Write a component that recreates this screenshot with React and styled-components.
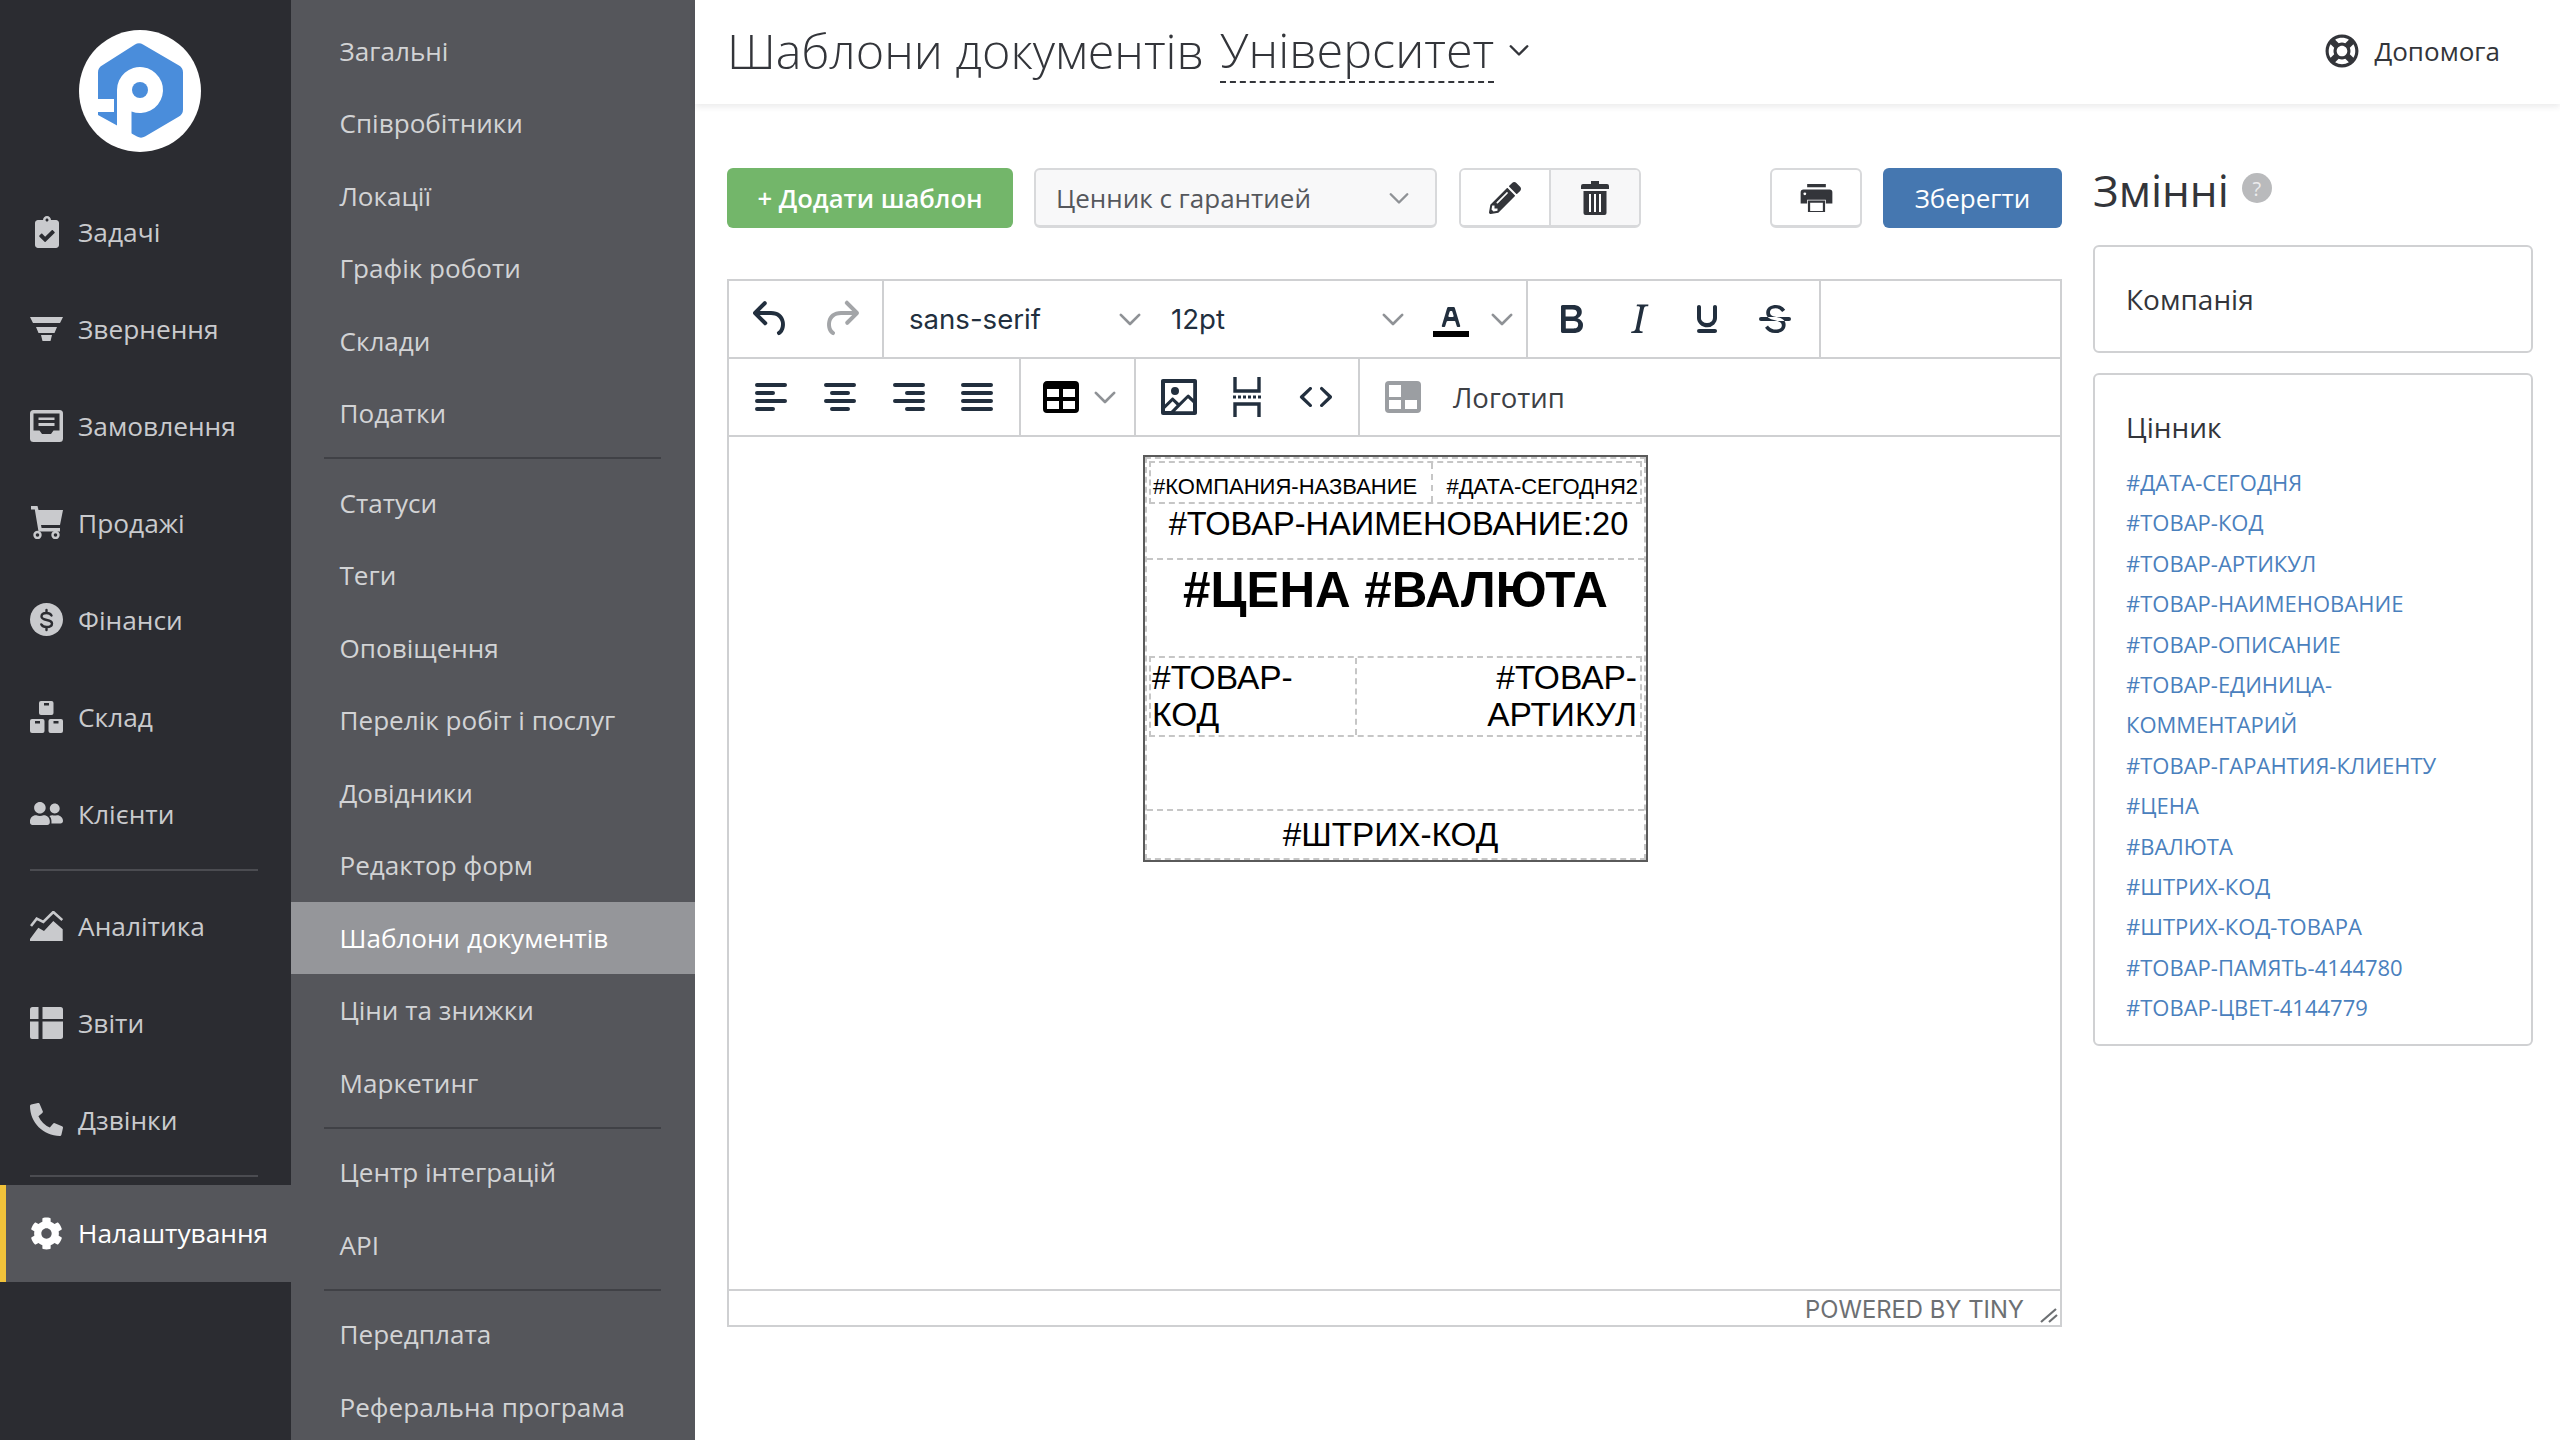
import React from "react";
import styled, { createGlobalStyle } from "styled-components";
import {
  FaClipboardCheck,
  FaUserFriends,
  FaPhoneAlt,
  FaCog,
  FaPencilAlt,
  FaRegLifeRing,
} from "react-icons/fa";

const GlobalStyle = createGlobalStyle`
  html, body {
    margin: 0;
    padding: 0;
    background: #fff;
    font-family: "Open Sans", "Noto Sans", sans-serif;
  }
  * { box-sizing: border-box; }
`;

const Page = styled.div`
  display: flex;
  width: 2560px;
  height: 1440px;
  overflow: hidden;
  background: #fff;
`;

/* main dark nav */
const MainNav = styled.nav`
  width: 291px;
  flex: none;
  background: #2b2c31;
  color: #c9cacd;
`;

const LogoWrap = styled.div`
  height: 183px;
  padding: 30px 0 0 78.5px;
`;

const NavRow = styled.div`
  display: flex;
  align-items: center;
  gap: 15px;
  height: ${(p) => (p.$active ? "96.5px" : "97px")};
  padding-left: ${(p) => (p.$active ? "24px" : "30px")};
  font-size: 26.3px;
  font-weight: 500;
  color: ${(p) => (p.$active ? "#fff" : "#c9cacd")};
  background: ${(p) => (p.$active ? "#55565b" : "transparent")};
  border-left: ${(p) => (p.$active ? "6px solid #f0c23a" : "none")};
`;

const NavIcon = styled.span`
  width: 33px;
  height: 33px;
  flex: none;
  display: flex;
  align-items: center;
  justify-content: center;
`;

const NavDivider = styled.div`
  height: 2px;
  margin: 6.5px 33px ${(p) => p.$after || 6.5}px 30px;
  background: #4b4c51;
`;

/* second level nav */
const SubNav = styled.nav`
  width: 404px;
  flex: none;
  padding-top: 14.5px;
  background: #55565b;
`;

const SubRow = styled.div`
  display: flex;
  align-items: center;
  height: 72.5px;
  padding-left: 48.5px;
  font-size: 26.1px;
  font-weight: ${(p) => (p.$active ? 500 : 400)};
  color: ${(p) => (p.$active ? "#fff" : "#d2d3d5")};
  background: ${(p) => (p.$active ? "#95969a" : "transparent")};
`;

const SubDivider = styled.div`
  height: 2px;
  margin: 7.5px 34px 7.5px 33px;
  background: #404146;
`;

/* content */
const Main = styled.main`
  flex: 1;
  min-width: 0;
`;

const Header = styled.header`
  display: flex;
  align-items: center;
  justify-content: space-between;
  height: 104px;
  padding: 0 60px 3px 32px;
  box-shadow: 0 3px 6px rgba(40, 40, 50, 0.09);
`;

const Title = styled.h1`
  display: flex;
  align-items: center;
  margin: -1px 0 0;
  font-size: 48.5px;
  font-weight: 300;
  color: #33353a;
`;

const TitleSwitch = styled.span`
  margin: 0 7px 0 16px;
  line-height: 64px;
  border-bottom: 2px dashed #33353a;
`;

const Help = styled.div`
  display: flex;
  align-items: center;
  gap: 15px;
  font-size: 26px;
  color: #33353a;
`;

const Body = styled.div`
  display: flex;
  gap: 31px;
  padding: 64px 27px 0 32px;
`;

const EditorCol = styled.div`
  width: 1335px;
  flex: none;
`;

const Actions = styled.div`
  display: flex;
  align-items: center;
  height: 60px;
  margin-bottom: 51px;
`;

const Button = styled.button`
  height: 60px;
  padding: 0;
  border: 0;
  border-radius: 6px;
  font-family: inherit;
  font-size: 26px;
  font-weight: 600;
  color: #fff;
`;

const AddButton = styled(Button)`
  width: 286px;
  font-size: 25.6px;
  background: #73b66a;
`;

const SaveButton = styled(Button)`
  width: 179px;
  margin-left: 21px;
  font-weight: 500;
  background: #4577b0;
`;

const Select = styled.div`
  display: flex;
  align-items: center;
  justify-content: space-between;
  width: 403px;
  height: 60px;
  margin-left: 21px;
  padding: 0 18px 0 20px;
  border: 2px solid #d8d9db;
  border-bottom-width: 3px;
  border-radius: 6px;
  background: #f8f8f9;
  font-size: 26px;
  color: #55575c;
`;

const IconGroup = styled.div`
  display: flex;
  height: 60px;
  margin-left: 22px;
  border: 2px solid #d8d9db;
  border-bottom-width: 3px;
  border-radius: 6px;
  overflow: hidden;
`;

const GroupCell = styled.div`
  display: flex;
  align-items: center;
  justify-content: center;
  width: ${(p) => p.$w}px;
  background: ${(p) => (p.$shade ? "#f7f7f8" : "#fff")};
  border-left: ${(p) => (p.$shade ? "2px solid #d8d9db" : "none")};
`;

const PrintButton = styled(IconGroup)`
  width: 92px;
  margin-left: 129px;
  align-items: center;
  justify-content: center;
`;

/* editor */
const Editor = styled.div`
  display: flex;
  flex-direction: column;
  height: 1048px;
  border: 2px solid #cfd0d2;
`;

const ToolbarRow = styled.div`
  display: flex;
  height: 78px;
  flex: none;
  border-bottom: 2px solid #cfd0d2;
`;

const ToolGroup = styled.div`
  display: flex;
  align-items: center;
  width: ${(p) => p.$w}px;
  padding-left: ${(p) => p.$pad || 0}px;
  border-right: ${(p) => (p.$last ? "none" : "2px solid #cfd0d2")};
  flex: none;
`;

const ToolButton = styled.span`
  display: flex;
  align-items: center;
  justify-content: center;
  width: ${(p) => p.$w || 68}px;
  flex: none;
  color: ${(p) => (p.$off ? "#a3a5a8" : "#222f3e")};
`;

const ColorButton = styled.span`
  display: flex;
  align-items: center;
  gap: 7px;
  padding-left: 18px;
`;

const FontPicker = styled.span`
  display: flex;
  align-items: center;
  justify-content: space-between;
  width: ${(p) => p.$w}px;
  flex: none;
  padding-left: 25px;
  font-family: Inter, "Liberation Sans", sans-serif;
  font-size: 27.6px;
  color: #222f3e;

  svg {
    margin-right: -4px;
  }
`;

const TemplateLabel = styled.span`
  margin-left: 26px;
  font-family: "Open Sans", sans-serif;
  font-size: 27.5px;
  color: #3d4045;
`;

const EditArea = styled.div`
  flex: 1;
  padding: 18px 0 0 414px;
`;

const StatusBar = styled.div`
  display: flex;
  align-items: center;
  justify-content: flex-end;
  height: 36px;
  flex: none;
  padding: 2px 36px 0 0;
  border-top: 2px solid #cfd0d2;
  position: relative;
  font-family: Inter, "Liberation Sans", sans-serif;
  font-size: 23.8px;
  color: #6d7073;
`;

const ResizeHandle = styled.svg`
  position: absolute;
  right: 1px;
  bottom: 1px;
`;

/* label preview */
const Label = styled.div`
  width: 505px;
  height: 407px;
  border: 2px solid #5a5a5a;
  font-family: "Liberation Sans", Arial, sans-serif;
  color: #000;
`;

const LabelInner = styled.div`
  display: flex;
  flex-direction: column;
  height: 100%;
  border: 2px dashed #c6c6c6;
`;

const LabelRow = styled.div`
  height: ${(p) => (p.$h ? `${p.$h}px` : "auto")};
  flex: ${(p) => (p.$h ? "none" : 1)};
  padding-top: ${(p) => p.$top || 0}px;
  padding-right: ${(p) => p.$right || 0}px;
  border-bottom: ${(p) => (p.$line ? "2px dashed #c6c6c6" : "none")};
  font-size: ${(p) => p.$size || 32.6}px;
  font-weight: ${(p) => (p.$bold ? 700 : 400)};
  text-align: center;
`;

const NestedTable = styled.div`
  display: grid;
  grid-template-columns: ${(p) => p.$cols};
  height: ${(p) => p.$h}px;
  margin: 0 2px;
  border: 2px dashed #c6c6c6;
  text-align: left;
`;

const NestedCell = styled.div`
  padding: ${(p) => p.$pad || "0 3px"};
  font-size: ${(p) => p.$size}px;
  line-height: ${(p) => p.$lh || "normal"};
  text-align: ${(p) => p.$align || "left"};
  white-space: ${(p) => (p.$nowrap ? "nowrap" : "normal")};
  border-right: ${(p) => (p.$line ? "2px dashed #c6c6c6" : "none")};
`;

const LabelName = styled.div`
  margin-top: 1px;
  line-height: 38px;
  text-indent: 6px;
`;

/* right column */
const VarsCol = styled.aside`
  width: 440px;
  flex: none;
`;

const VarsTitle = styled.h2`
  display: flex;
  align-items: center;
  gap: 13px;
  height: 48px;
  margin: -2px 0 31px;
  font-size: 44px;
  font-weight: 400;
  color: #33353a;
`;

const QuestionBadge = styled.span`
  display: flex;
  align-items: center;
  justify-content: center;
  width: 30px;
  height: 30px;
  margin-top: -4px;
  border-radius: 50%;
  background: #b9babc;
  font-size: 20px;
  color: #ececed;
`;

const Card = styled.div`
  margin-bottom: ${(p) => p.$mb || 0}px;
  padding: ${(p) => p.$pad};
  border: 2px solid #d0d1d3;
  border-radius: 6px;
`;

const CardTitle = styled.div`
  font-size: 28px;
  font-weight: 500;
  line-height: 38px;
  color: #33353a;
`;

const VarList = styled.div`
  margin-top: 16px;
`;

const VarLink = styled.div`
  font-size: 22px;
  line-height: 40.4px;
  color: #4a80bd;
`;

const Chevron = ({ size = 40, color = "#8f9296" }) => (
  <svg width={size} height={size} viewBox="0 0 24 24" fill="none">
    <path d="M6.5 9.5L12 15l5.5-5.5" stroke={color} strokeWidth="1.6" strokeLinecap="round" strokeLinejoin="round" />
  </svg>
);

const TinyIcon = ({ d, size = 48 }) => (
  <svg width={size} height={size} viewBox="0 0 24 24" fill="currentColor" fillRule="evenodd">
    <path d={d} />
  </svg>
);

const Logo = () => (
  <svg width="122" height="122" viewBox="0 0 122 122">
    <circle cx="61" cy="61" r="61" fill="#fff" />
    <path
      d="M56 14.5a8 8 0 0 1 8 0l36 21a8 8 0 0 1 4 7v37a8 8 0 0 1-4 7l-34 20a8 8 0 0 1-8 0L19 85V42.500a8 8 0 0 1 4-7z"
      fill="#4a8ddb"
    />
    <path d="M15 69h20v13H15z" fill="#fff" />
    <path d="M38 60a23 23 0 1 1 14.500 21.400V112L38 104z" fill="#fff" />
    <circle cx="61" cy="60" r="8" fill="#4a8ddb" />
  </svg>
);

const FilterIcon = () => (
  <svg width="33" height="24" viewBox="0 0 33 24" fill="currentColor">
    <path d="M0 0h33l-3 6H3zM6 10h21l-2.500 6h-16zM11 18h11l-1.500 6h-8z" />
  </svg>
);

const InboxIcon = () => (
  <svg width="33" height="32" viewBox="0 0 33 32">
    <rect width="33" height="32" rx="3.500" fill="currentColor" />
    <path d="M3.500 3.500h26v17h-6l-2.500 3.500h-9l-2.500-3.500h-6z" fill="#2b2c31" />
    <rect x="8.500" y="7.500" width="16" height="2.500" fill="currentColor" />
    <rect x="8.500" y="13" width="16" height="3" fill="currentColor" />
  </svg>
);

const CartIcon = () => (
  <svg width="33" height="33" viewBox="0 0 33 33" fill="currentColor">
    <path d="M1 0h6.500l1 4H33l-3 15H11l.6 3H30v3.500H8.500L4.800 3.500H1z" />
    <circle cx="7.500" cy="29" r="3" fill="none" stroke="currentColor" strokeWidth="2.400" />
    <circle cx="25.500" cy="29" r="3" fill="none" stroke="currentColor" strokeWidth="2.400" />
  </svg>
);

const FinanceIcon = () => (
  <svg width="33" height="33" viewBox="0 0 33 33">
    <circle cx="16.500" cy="16.500" r="16.500" fill="currentColor" />
    <path
      d="M21.500 12.500c-1-1.800-2.800-2.500-5-2.500-2.800 0-5 1.300-5 3.500 0 4.800 10.500 2.200 10.500 7 0 2.200-2.300 3.500-5.500 3.500-2.300 0-4.200-.8-5.200-2.600M16.500 7v3M16.500 24v3"
      fill="none"
      stroke="#2b2c31"
      strokeWidth="2.400"
      strokeLinecap="round"
    />
  </svg>
);

const BoxesIcon = () => (
  <svg width="33" height="32" viewBox="0 0 33 32" fill="currentColor">
    <rect x="9" y="0" width="14.500" height="14" rx="2" />
    <rect x="14" y="2" width="5" height="2.500" fill="#2b2c31" />
    <rect x="0" y="18" width="14.500" height="14" rx="2" />
    <rect x="18.500" y="18" width="14.500" height="14" rx="2" />
    <rect x="5" y="20" width="5" height="2.500" fill="#2b2c31" />
    <rect x="23.500" y="20" width="5" height="2.500" fill="#2b2c31" />
  </svg>
);

const ChartIcon = () => (
  <svg width="33" height="30" viewBox="0 0 33 30" fill="currentColor">
    <path d="M0 30v-2l8.300-11.300 5.700 3.300 9.300-10 9.400 8.300V30z" />
    <path d="M1 15l5.700-7.300 6.600 3.300 10-10 9 8" fill="none" stroke="currentColor" strokeWidth="2.600" />
  </svg>
);

const ReportsIcon = () => (
  <svg width="33" height="32" viewBox="0 0 33 32" fill="currentColor">
    <path d="M2.500 0h6v12H0V2.500A2.500 2.500 0 0 1 2.500 0z" />
    <path d="M12.500 0H30.500A2.500 2.500 0 0 1 33 2.500V12H12.500z" />
    <path d="M0 14.500h8.500V32H2a2 2 0 0 1-2-2z" />
    <path d="M12.500 14.500H33V29.500a2.500 2.500 0 0 1-2.500 2.500H12.500z" />
  </svg>
);

const TrashIcon = () => (
  <svg width="28" height="34" viewBox="0 0 28 34" fill="#33353a">
    <path d="M10 0h8v3h8a2 2 0 0 1 2 2v3H0V5a2 2 0 0 1 2-2h8z" />
    <path d="M2.500 10h23v22a2 2 0 0 1-2 2h-19a2 2 0 0 1-2-2z" />
    <path d="M8 13h2v18H8zM13 13h2v18h-2zM18 13h2v18h-2z" fill="#fff" />
  </svg>
);

const PrintIcon = () => (
  <svg width="33" height="28" viewBox="0 0 34 30" fill="#33353a">
    <rect x="7" y="0" width="20" height="3.500" />
    <path d="M3 6h28a3 3 0 0 1 3 3v12h-7v-4H7v4H0V9a3 3 0 0 1 3-3z" />
    <path d="M9 19h16v11H9z" fill="none" stroke="#33353a" strokeWidth="2.400" />
    <circle cx="4.500" cy="10.500" r="1.500" fill="#fff" />
  </svg>
);

const tiny = {
  undo: "M6.4 8H12c3.700 0 6.200 2 6.800 5.100.6 2.700-.4 5.600-2.300 6.800a1 1 0 0 1-1-1.800c1.100-.6 1.800-2.700 1.400-4.600-.5-2.100-2.100-3.500-4.900-3.500H6.400l3.300 3.300a1 1 0 1 1-1.400 1.400l-5-5a1 1 0 0 1 0-1.400l5-5a1 1 0 0 1 1.400 1.400L6.400 8z",
  redo: "M17.600 10H12c-2.800 0-4.400 1.400-4.900 3.500-.4 2 .3 4 1.400 4.600a1 1 0 1 1-1 1.800c-2-1.200-2.900-4.100-2.300-6.800.6-3 3-5.100 6.800-5.100h5.600l-3.300-3.300a1 1 0 1 1 1.400-1.400l5 5a1 1 0 0 1 0 1.400l-5 5a1 1 0 0 1-1.400-1.400l3.300-3.300z",
  bold: "M7.800 19c-.3 0-.5 0-.6-.2l-.2-.5V5.700c0-.2 0-.4.200-.5l.6-.2h5c1.500 0 2.700.3 3.500 1 .7.6 1.100 1.400 1.100 2.500a3 3 0 0 1-.6 1.900c-.4.6-1 1-1.600 1.200.4.100.9.300 1.300.6s.8.7 1 1.200c.4.4.5 1 .5 1.600 0 1.300-.4 2.300-1.300 3-.8.7-2.100 1-3.800 1H7.800zm5-8.300c.6 0 1.200-.1 1.600-.5.4-.3.6-.7.6-1.300 0-1.100-.8-1.700-2.300-1.700H9.300v3.500h3.400zm.5 6c.7 0 1.300-.1 1.700-.4.4-.4.6-.9.6-1.500s-.2-1-.7-1.400c-.4-.3-1-.4-2-.4H9.400v3.800h4z",
  italic: "M16.700 4.700l-.1.9h-.3c-.6 0-1 0-1.400.3-.3.3-.4.6-.5 1.100l-2.100 9.800v.6c0 .5.4.8 1.400.8h.2l-.2.8H8l.2-.8h.2c1.100 0 1.800-.5 2-1.500l2-9.800.1-.5c0-.6-.4-.8-1.400-.8h-.3l.2-.9h5.800z",
  underline: "M16 5c.6 0 1 .4 1 1v5.500a4 4 0 0 1-.4 1.800l-1 1.400a5.300 5.300 0 0 1-5.500 1 5 5 0 0 1-1.600-1c-.5-.4-.8-.9-1.100-1.400a4 4 0 0 1-.4-1.800V6c0-.6.4-1 1-1s1 .4 1 1v5.500c0 .3 0 .6.2 1l.6.7a3.300 3.300 0 0 0 2.200.8 3.400 3.400 0 0 0 2.200-.8c.3-.2.4-.5.6-.8l.2-.9V6c0-.6.4-1 1-1zM8 17h8c.6 0 1 .4 1 1s-.4 1-1 1H8a1 1 0 0 1 0-2z",
  strike: "M15.600 8.500c-.5-.7-1-1.100-1.300-1.300-.6-.4-1.300-.6-2-.6-2.700 0-2.800 1.700-2.800 2.100 0 1.600 1.800 2 3.200 2.300 4.400.9 4.600 2.800 4.600 3.900 0 1.400-.7 4.100-5 4.100A6.200 6.200 0 0 1 7 16.400l1.500-1.100c.4.6 1.600 2 3.700 2 1.600 0 2.500-.4 3-1.200.4-.8.3-2-.8-2.600-.7-.4-1.600-.7-2.900-1-1-.2-3.900-.8-3.900-3.600C7.600 6 10.300 5 12.400 5c2.900 0 4.200 1.600 4.700 2.400l-1.500 1.100zM5 11h14a1 1 0 0 1 0 2H5a1 1 0 0 1 0-2z",
  alignLeft: "M5 5h14a1 1 0 0 1 0 2H5a1 1 0 1 1 0-2zm0 4h8a1 1 0 0 1 0 2H5a1 1 0 1 1 0-2zm0 8h8a1 1 0 0 1 0 2H5a1 1 0 0 1 0-2zm0-4h14a1 1 0 0 1 0 2H5a1 1 0 0 1 0-2z",
  alignCenter: "M5 5h14a1 1 0 0 1 0 2H5a1 1 0 1 1 0-2zm3 4h8a1 1 0 0 1 0 2H8a1 1 0 1 1 0-2zm0 8h8a1 1 0 0 1 0 2H8a1 1 0 0 1 0-2zm-3-4h14a1 1 0 0 1 0 2H5a1 1 0 0 1 0-2z",
  alignRight: "M5 5h14a1 1 0 0 1 0 2H5a1 1 0 1 1 0-2zm6 4h8a1 1 0 0 1 0 2h-8a1 1 0 0 1 0-2zm0 8h8a1 1 0 0 1 0 2h-8a1 1 0 0 1 0-2zm-6-4h14a1 1 0 0 1 0 2H5a1 1 0 0 1 0-2z",
  justify: "M5 5h14a1 1 0 0 1 0 2H5a1 1 0 1 1 0-2zm0 4h14a1 1 0 0 1 0 2H5a1 1 0 1 1 0-2zm0 4h14a1 1 0 0 1 0 2H5a1 1 0 0 1 0-2zm0 4h14a1 1 0 0 1 0 2H5a1 1 0 0 1 0-2z",
  table: "M19 4a2 2 0 0 1 2 2v12a2 2 0 0 1-2 2H5a2 2 0 0 1-2-2V6c0-1.100.9-2 2-2h14zM5 14v4h6v-4H5zm14 0h-6v4h6v-4zm0-6h-6v4h6V8zM5 12h6V8H5v4z",
  image: "M5 15.700l3.300-3.200c.3-.3.7-.3 1 0L12 15l4.100-4c.3-.4.8-.4 1 0l2 1.900V5H5v10.700zM5 18v1h3l2.800-2.900-2-2L5 17.900zm14-3l-2.500-2.400-6.400 6.500H19v-4.100zM4 3h16c.6 0 1 .4 1 1v16c0 .6-.4 1-1 1H4a1 1 0 0 1-1-1V4c0-.6.4-1 1-1zm6 8a2 2 0 1 0 0-4 2 2 0 0 0 0 4z",
  code: "M9.800 15.700c.3.3.3.8 0 1-.3.4-.9.4-1.200 0l-4.400-4.100a.8.8 0 0 1 0-1.200l4.400-4.200c.3-.3.9-.3 1.200 0 .3.3.3.8 0 1.100L6 12l3.800 3.700zM14.200 15.700c-.3.3-.3.8 0 1 .4.4.9.4 1.200 0l4.400-4.100c.3-.3.3-.9 0-1.200l-4.400-4.200a.8.8 0 0 0-1.200 0c-.3.3-.3.8 0 1.100L18 12l-3.800 3.700z",
};

const TextColorIcon = () => (
  <svg width="48" height="48" viewBox="0 0 24 24" fill="#222f3e" fillRule="evenodd">
    <path d="M8.700 16h-.8a.5.5 0 0 1-.5-.6l2.700-9c.1-.3.3-.4.5-.4h2.800c.2 0 .4.100.5.400l2.700 9a.5.5 0 0 1-.5.600h-.8a.5.500 0 0 1-.4-.4l-.7-2.200c0-.3-.3-.4-.5-.4h-3.400c-.2 0-.4.100-.5.400l-.7 2.200c0 .3-.2.400-.4.400zm2.600-7.600l-.6 2a.5.5 0 0 0 .5.600h1.600a.5.5 0 0 0 .5-.6l-.6-2c0-.3-.3-.4-.5-.4h-.4c-.2 0-.4.100-.5.400z" />
    <path d="M3 18h18v3H3z" fill="#000" />
  </svg>
);

const PageBreakIcon = () => (
  <svg width="48" height="48" viewBox="0 0 24 24" fill="none" stroke="currentColor" strokeWidth="1.700">
    <path d="M6 2v7h12V2M6 22v-6.500h12V22" />
    <path d="M5 12h14" strokeWidth="1.600" strokeDasharray="1.500 1" />
  </svg>
);

const TemplateIcon = () => (
  <svg width="48" height="48" viewBox="0 0 24 24">
    <rect x="3" y="4" width="18" height="16" rx="2" fill="#9b9ea2" />
    <rect x="5" y="6" width="6" height="6" fill="#fff" />
    <rect x="5" y="13.500" width="6" height="4.500" fill="#fff" />
    <rect x="13" y="13.500" width="6" height="4.500" fill="#fff" />
  </svg>
);

const navTop = [
  ["Задачі", <FaClipboardCheck size={32} />],
  ["Звернення", <FilterIcon />],
  ["Замовлення", <InboxIcon />],
  ["Продажі", <CartIcon />],
  ["Фінанси", <FinanceIcon />],
  ["Склад", <BoxesIcon />],
  ["Клієнти", <FaUserFriends size={33} />],
];

const navMiddle = [
  ["Аналітика", <ChartIcon />],
  ["Звіти", <ReportsIcon />],
  ["Дзвінки", <FaPhoneAlt size={33} />],
];

const subGroups = [
  ["Загальні", "Співробітники", "Локації", "Графік роботи", "Склади", "Податки"],
  ["Статуси", "Теги", "Оповіщення", "Перелік робіт і послуг", "Довідники", "Редактор форм", "Шаблони документів", "Ціни та знижки", "Маркетинг"],
  ["Центр інтеграцій", "API"],
  ["Передплата", "Реферальна програма"],
];

const variables = [
  "#ДАТА-СЕГОДНЯ",
  "#ТОВАР-КОД",
  "#ТОВАР-АРТИКУЛ",
  "#ТОВАР-НАИМЕНОВАНИЕ",
  "#ТОВАР-ОПИСАНИЕ",
  "#ТОВАР-ЕДИНИЦА-КОММЕНТАРИЙ",
  "#ТОВАР-ГАРАНТИЯ-КЛИЕНТУ",
  "#ЦЕНА",
  "#ВАЛЮТА",
  "#ШТРИХ-КОД",
  "#ШТРИХ-КОД-ТОВАРА",
  "#ТОВАР-ПАМЯТЬ-4144780",
  "#ТОВАР-ЦВЕТ-4144779",
];

function App() {
  return (
    <Page>
      <GlobalStyle />
      <MainNav>
        <LogoWrap>
          <Logo />
        </LogoWrap>
        {navTop.map(([label, icon]) => (
          <NavRow key={label}>
            <NavIcon>{icon}</NavIcon>
            {label}
          </NavRow>
        ))}
        <NavDivider />
        {navMiddle.map(([label, icon]) => (
          <NavRow key={label}>
            <NavIcon>{icon}</NavIcon>
            {label}
          </NavRow>
        ))}
        <NavDivider $after={8.5} />
        <NavRow $active>
          <NavIcon>
            <FaCog size={33} />
          </NavIcon>
          Налаштування
        </NavRow>
      </MainNav>

      <SubNav>
        {subGroups.map((group, i) => (
          <React.Fragment key={group[0]}>
            {i > 0 && <SubDivider />}
            {group.map((item) => (
              <SubRow key={item} $active={item === "Шаблони документів"}>
                {item}
              </SubRow>
            ))}
          </React.Fragment>
        ))}
      </SubNav>

      <Main>
        <Header>
          <Title>
            Шаблони документів
            <TitleSwitch>Університет</TitleSwitch>
            <Chevron size={36} color="#33353a" />
          </Title>
          <Help>
            <FaRegLifeRing size={34} />
            Допомога
          </Help>
        </Header>

        <Body>
          <EditorCol>
            <Actions>
              <AddButton>+ Додати шаблон</AddButton>
              <Select>
                Ценник с гарантией
                <Chevron size={36} />
              </Select>
              <IconGroup>
                <GroupCell $w={88}>
                  <FaPencilAlt size={32} color="#33353a" />
                </GroupCell>
                <GroupCell $w={90} $shade>
                  <TrashIcon />
                </GroupCell>
              </IconGroup>
              <PrintButton>
                <PrintIcon />
              </PrintButton>
              <SaveButton>Зберегти</SaveButton>
            </Actions>

            <Editor>
              <ToolbarRow>
                <ToolGroup $w={155} $pad={6}>
                  <ToolButton $w={71}>
                    <TinyIcon d={tiny.undo} />
                  </ToolButton>
                  <ToolButton $w={70} $off>
                    <TinyIcon d={tiny.redo} />
                  </ToolButton>
                </ToolGroup>
                <ToolGroup $w={644}>
                  <FontPicker $w={262}>
                    sans-serif
                    <Chevron />
                  </FontPicker>
                  <FontPicker $w={263}>
                    12pt
                    <Chevron />
                  </FontPicker>
                  <ColorButton>
                    <TextColorIcon />
                    <Chevron />
                  </ColorButton>
                </ToolGroup>
                <ToolGroup $w={293} $pad={9}>
                  <ToolButton>
                    <TinyIcon d={tiny.bold} />
                  </ToolButton>
                  <ToolButton>
                    <TinyIcon d={tiny.italic} />
                  </ToolButton>
                  <ToolButton>
                    <TinyIcon d={tiny.underline} />
                  </ToolButton>
                  <ToolButton>
                    <TinyIcon d={tiny.strike} />
                  </ToolButton>
                </ToolGroup>
              </ToolbarRow>
              <ToolbarRow>
                <ToolGroup $w={292} $pad={8}>
                  <ToolButton $w={68.7}>
                    <TinyIcon d={tiny.alignLeft} />
                  </ToolButton>
                  <ToolButton $w={68.7}>
                    <TinyIcon d={tiny.alignCenter} />
                  </ToolButton>
                  <ToolButton $w={68.7}>
                    <TinyIcon d={tiny.alignRight} />
                  </ToolButton>
                  <ToolButton $w={68.7}>
                    <TinyIcon d={tiny.justify} />
                  </ToolButton>
                </ToolGroup>
                <ToolGroup $w={115} $pad={16}>
                  <TinyIcon d={tiny.table} />
                  <Chevron />
                </ToolGroup>
                <ToolGroup $w={224} $pad={8.5}>
                  <ToolButton>
                    <TinyIcon d={tiny.image} />
                  </ToolButton>
                  <ToolButton>
                    <PageBreakIcon />
                  </ToolButton>
                  <ToolButton $w={70}>
                    <TinyIcon d={tiny.code} />
                  </ToolButton>
                </ToolGroup>
                <ToolGroup $w={300} $pad={19} $last>
                  <TemplateIcon />
                  <TemplateLabel>Логотип</TemplateLabel>
                </ToolGroup>
              </ToolbarRow>

              <EditArea>
                <Label>
                  <LabelInner>
                    <LabelRow $h={101} $line $top={2}>
                      <NestedTable $cols="282px 1fr" $h={43}>
                        <NestedCell $size={22} $pad="11px 0 0 2px" $nowrap $line>
                          #КОМПАНИЯ-НАЗВАНИЕ
                        </NestedCell>
                        <NestedCell $size={22} $pad="11px 2px 0 0" $align="right" $nowrap>
                          #ДАТА-СЕГОДНЯ2
                        </NestedCell>
                      </NestedTable>
                      <LabelName>#ТОВАР-НАИМЕНОВАНИЕ:20</LabelName>
                    </LabelRow>
                    <LabelRow $h={96} $top={1} $size={49.3} $bold>
                      #ЦЕНА #ВАЛЮТА
                    </LabelRow>
                    <LabelRow $h={155} $line>
                      <NestedTable $cols="206px 1fr" $h={81}>
                        <NestedCell $size={33.5} $lh="37px" $pad="1px 3px 0 1px" $line>
                          #ТОВАР-КОД
                        </NestedCell>
                        <NestedCell $size={33.5} $lh="37px" $pad="1px 3px 0 80px" $align="right">
                          #ТОВАР-АРТИКУЛ
                        </NestedCell>
                      </NestedTable>
                    </LabelRow>
                    <LabelRow $top={5} $right={10} $size={33.3}>
                      #ШТРИХ-КОД
                    </LabelRow>
                  </LabelInner>
                </Label>
              </EditArea>

              <StatusBar>
                POWERED BY TINY
                <ResizeHandle width="20" height="18" viewBox="0 0 20 18" fill="none" stroke="#6d7073" strokeWidth="2.200">
                  <path d="M2 16L17 3M10 16l8-7" />
                </ResizeHandle>
              </StatusBar>
            </Editor>
          </EditorCol>

          <VarsCol>
            <VarsTitle>
              Змінні
              <QuestionBadge>?</QuestionBadge>
            </VarsTitle>
            <Card $mb={20} $pad="33px 31px">
              <CardTitle>Компанія</CardTitle>
            </Card>
            <Card $pad="33px 31px 16px">
              <CardTitle>Цінник</CardTitle>
              <VarList>
                {variables.map((v) => (
                  <VarLink key={v}>{v}</VarLink>
                ))}
              </VarList>
            </Card>
          </VarsCol>
        </Body>
      </Main>
    </Page>
  );
}

export default App;
